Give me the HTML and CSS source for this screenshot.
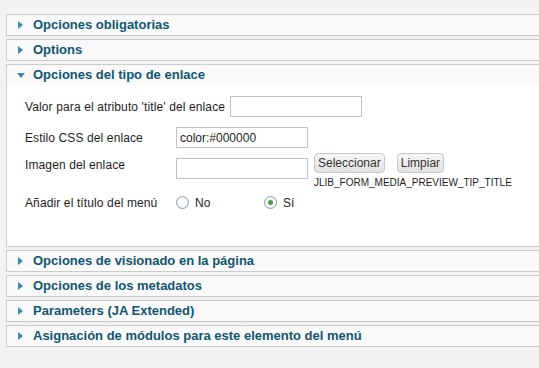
FILE: index.html
```html
<!DOCTYPE html>
<html lang="es">
<head>
    <meta charset="utf-8">
    <title>Opciones del elemento de menú</title>
    <link rel="stylesheet" href="styles.css">
</head>
<body>

<div class="panes">

    <div class="pane">
        <h3 class="pane-toggler"><span class="arrow"></span>Opciones obligatorias</h3>
    </div>

    <div class="pane">
        <h3 class="pane-toggler"><span class="arrow"></span>Options</h3>
    </div>

    <div class="pane open">
        <h3 class="pane-toggler"><span class="arrow down"></span>Opciones del tipo de enlace</h3>
        <div class="pane-body">
            <ul class="adminformlist">
                <li>
                    <label>Valor para el atributo 'title' del enlace</label>
                    <input type="text" class="inputbox" value="">
                </li>
                <li>
                    <label>Estilo CSS del enlace</label>
                    <input type="text" class="inputbox" value="color:#000000">
                </li>
                <li class="media-row">
                    <label>Imagen del enlace</label>
                    <input type="text" class="inputbox" value="">
                    <div class="media-side">
                        <div class="buttons">
                            <button class="btn">Seleccionar</button>
                            <button class="btn">Limpiar</button>
                        </div>
                        <div class="preview">JLIB_FORM_MEDIA_PREVIEW_TIP_TITLE</div>
                    </div>
                </li>
                <li class="radio-row">
                    <label>Añadir el título del menú</label>
                    <span class="radio-opt"><span class="radio"></span>No</span>
                    <span class="radio-opt"><span class="radio checked"></span>Sí</span>
                </li>
            </ul>
        </div>
    </div>

    <div class="pane">
        <h3 class="pane-toggler"><span class="arrow"></span>Opciones de visionado en la página</h3>
    </div>

    <div class="pane">
        <h3 class="pane-toggler"><span class="arrow"></span>Opciones de los metadatos</h3>
    </div>

    <div class="pane">
        <h3 class="pane-toggler"><span class="arrow"></span>Parameters (JA Extended)</h3>
    </div>

    <div class="pane">
        <h3 class="pane-toggler"><span class="arrow"></span>Asignación de módulos para este elemento del menú</h3>
    </div>

</div>

</body>
</html>
```

FILE: styles.css
```css
html, body {
    margin: 0;
    padding: 0;
    background-color: #f2f2f2;
    font-family: "Liberation Sans", Arial, sans-serif;
    font-size: 12px;
    color: #1e1e1e;
    overflow: hidden;
}

.panes {
    padding: 14px 0 0 6px;
    width: 560px;
}

.pane {
    border: 1px solid #cccccc;
    margin-bottom: 3px;
    background-color: #f9f9f9;
}

.pane-toggler {
    margin: 0;
    height: 20px;
    line-height: 20px;
    padding-left: 11px;
    font-size: 13px;
    font-weight: bold;
    color: #115670;
    display: flex;
    align-items: center;
}

.arrow {
    display: inline-block;
    width: 0;
    height: 0;
    border-top: 4px solid transparent;
    border-bottom: 4px solid transparent;
    border-left: 5px solid #3a88b3;
    margin-right: 10px;
}

.arrow.down {
    border-left: 4px solid transparent;
    border-right: 4px solid transparent;
    border-top: 5px solid #3a88b3;
    border-bottom: 0;
    margin-left: -1px;
    margin-right: 8px;
}

.pane-body {
    background-color: #ffffff;
    height: 161px;
    padding: 11px 0 0 18px;
    box-sizing: border-box;
}

.adminformlist {
    list-style: none;
    margin: 0;
    padding: 0;
}

.adminformlist li {
    display: flex;
    align-items: center;
    height: 21px;
    margin-bottom: 10px;
}

.adminformlist label {
    min-width: 146px;
    margin-right: 5px;
    white-space: nowrap;
    letter-spacing: 0.12px;
}

.inputbox {
    width: 132px;
    height: 21px;
    box-sizing: border-box;
    border: 1px solid #c3c3c3;
    padding: 1px 3px 0;
    font-family: "Liberation Sans", Arial, sans-serif;
    font-size: 12px;
    color: #1e1e1e;
    background: #fff;
    margin: 0;
}

.media-row {
    align-items: flex-start !important;
}

.media-side {
    margin-left: 6px;
    margin-top: -5px;
}

.buttons {
    display: flex;
    gap: 12px;
}

.btn {
    height: 20px;
    padding: 0 3px;
    border: 1px solid #c8c8c8;
    border-radius: 4px;
    background: linear-gradient(#f6f6f6, #e2e2e2);
    font-family: "Liberation Sans", Arial, sans-serif;
    font-size: 12px;
    color: #333;
    margin: 0;
}

.preview {
    font-size: 10px;
    margin-top: 4px;
    white-space: nowrap;
    color: #1e1e1e;
}

.radio-row {
    margin-top: 13px;
}

.radio-opt {
    display: inline-flex;
    align-items: center;
    width: 88px;
}

.radio {
    width: 11px;
    height: 11px;
    border: 1px solid #8a9aa8;
    border-radius: 50%;
    background: radial-gradient(circle, #ffffff 40%, #e4e8ec 100%);
    margin-right: 6px;
    position: relative;
}

.radio.checked::after {
    content: "";
    position: absolute;
    left: 3px;
    top: 3px;
    width: 5px;
    height: 5px;
    border-radius: 50%;
    background: #3aa13a;
}
```
